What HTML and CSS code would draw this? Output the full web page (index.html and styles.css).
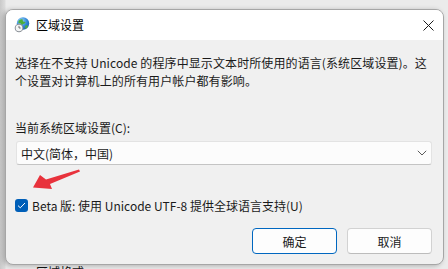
FILE: index.html
```html
<!DOCTYPE html>
<html lang="zh-CN">
<head>
<meta charset="utf-8">
<title>区域设置</title>
<link rel="stylesheet" href="styles.css">
</head>
<body>
<div class="dialog">
  <div class="titlebar">
    <svg class="app-icon" width="16" height="16" viewBox="0 0 16 16">
      <defs>
        <radialGradient id="g" cx="0.35" cy="0.3" r="0.8">
          <stop offset="0" stop-color="#9fd8ff"/>
          <stop offset="0.6" stop-color="#2f86d6"/>
          <stop offset="1" stop-color="#1a5ea8"/>
        </radialGradient>
      </defs>
      <circle cx="9" cy="6.5" r="6.2" fill="url(#g)"/>
      <path d="M5.2 3.2c1.2-0.9 2.6-1.1 3.4-0.6 0.6 0.5-0.2 1.3 0.6 1.8 0.8 0.4 1.8-0.2 2.2 0.8 0.3 0.9-0.8 1.3-1.6 1.5-0.9 0.2-1.1 1.2-2 1.1-0.9-0.1-0.8-1.2-1.6-1.5-0.8-0.3-1.6 0.1-1.8-0.6-0.2-0.9 0.2-1.8 0.8-2.5z" fill="#4cae3a"/>
      <path d="M11.6 8.4c0.8-0.2 2 0 2.4 0.4-0.4 1.4-1.4 2.6-2.6 3.2-0.3-0.8 0.2-1.4-0.2-2.1-0.3-0.6 0-1.3 0.4-1.5z" fill="#4cae3a"/>
      <circle cx="5" cy="11" r="4.3" fill="#8a8f96"/>
      <circle cx="5" cy="11" r="3.3" fill="#f4f5f6"/>
      <path d="M5 8.9V11h1.7" stroke="#555" stroke-width="0.8" fill="none"/>
    </svg>
    <span class="title">区域设置</span>
    <svg class="close" width="11" height="11" viewBox="0 0 11 11">
      <path d="M0.5 0.5L10.5 10.5M10.5 0.5L0.5 10.5" stroke="#1b1b1b" stroke-width="1"/>
    </svg>
  </div>
  <div class="content">
    <p class="desc">选择在不支持 Unicode 的程序中显示文本时所使用的语言(系统区域设置)。这个设置对计算机上的所有用户帐户都有影响。</p>
    <div class="label">当前系统区域设置(C):</div>
    <div class="select">
      <span>中文(简体，中国)</span>
      <svg width="10" height="6" viewBox="0 0 10 6"><path d="M0.8 0.8L5 5 9.2 0.8" stroke="#5a5a5a" stroke-width="1" fill="none"/></svg>
    </div>
    <label class="check">
      <span class="box"><svg width="9" height="7" viewBox="0 0 9 7"><path d="M1 3.6L3.3 5.8 8 1" stroke="#fff" stroke-width="1" fill="none"/></svg></span>
      <span>Beta 版: 使用 Unicode UTF-8 提供全球语言支持(U)</span>
    </label>
    <div class="buttons">
      <button class="btn primary">确定</button>
      <button class="btn">取消</button>
    </div>
  </div>
</div>
<div class="behind">区域格式</div>
<svg class="arrow" width="448" height="269" viewBox="0 0 448 269">
  <path d="M79 169.5 L80 171.5 L50 184 L52 189 L33 187.5 L40 175 L46 179.5 Z" fill="#e8323c"/>
</svg>
</body>
</html>
```
FILE: styles.css
```css
html, body {
  margin: 0;
  padding: 0;
}
body {
  width: 448px;
  height: 269px;
  overflow: hidden;
  background: linear-gradient(to right, #c9c9c9 0, #dcdcdc 5px, #ebebeb 6px);
  font-family: "Noto Sans CJK SC", "Noto Sans", sans-serif;
  font-size: 12px;
  color: #1a1a1a;
  position: relative;
  padding-top: 9px;
  box-sizing: border-box;
}
.dialog {
  margin-left: 5px;
  width: 439px;
  height: 256px;
  box-sizing: border-box;
  border: 1px solid #a6a6a6;
  border-radius: 8px;
  background: #f0f0f0;
  overflow: hidden;
  box-shadow: -2px 1px 5px rgba(0,0,0,0.25);
  display: flex;
  flex-direction: column;
}
.titlebar {
  height: 30px;
  background: #ffffff;
  display: flex;
  align-items: center;
  padding-left: 8px;
  flex-shrink: 0;
}
.app-icon {
  margin-right: 6px;
}
.title {
  font-size: 12px;
  color: #000;
  line-height: 16px;
}
.close {
  margin-left: auto;
  margin-right: 9px;
}
.content {
  padding: 14px 11px 0 9px;
  display: flex;
  flex-direction: column;
}
.desc {
  margin: 0;
  line-height: 17.5px;
  letter-spacing: 0.1px;
}
.label {
  margin-top: 30px;
  line-height: 17px;
}
.select {
  margin-top: 5px;
  height: 24px;
  box-sizing: border-box;
  background: #fcfcfc;
  border: 1px solid #e3e3e3;
  border-bottom-color: #c4c4c4;
  border-radius: 3px;
  display: flex;
  align-items: center;
  justify-content: space-between;
  padding: 0 4px 0 4px;
  margin-left: 1px;
}
.check {
  margin-top: 34px;
  display: flex;
  align-items: center;
  height: 13px;
  gap: 4px;
}
.box {
  width: 13px;
  height: 13px;
  background: #005fb8;
  border-radius: 3px;
  display: flex;
  align-items: center;
  justify-content: center;
  flex-shrink: 0;
}
.buttons {
  margin-top: 16px;
  display: flex;
  justify-content: flex-end;
  gap: 10px;
}
.btn {
  width: 85px;
  height: 26px;
  box-sizing: border-box;
  background: #fdfdfd;
  border: 1px solid #d2d2d2;
  border-bottom-color: #bcbcbc;
  border-radius: 4px;
  font-family: inherit;
  font-size: 12px;
  color: #1a1a1a;
  padding: 0;
}
.btn.primary {
  border: 1px solid #0067c0;
}
.behind {
  margin-left: 36px;
  line-height: 14px;
  color: #111;
  font-size: 12px;
}
.arrow {
  position: absolute;
  left: 0;
  top: 0;
  pointer-events: none;
}
```
